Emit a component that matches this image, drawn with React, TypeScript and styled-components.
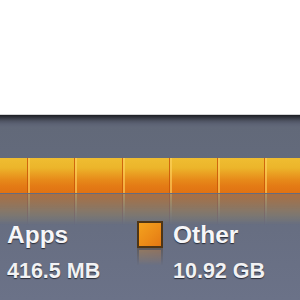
import React from "react";
import styled, { createGlobalStyle } from "styled-components";

const Global = createGlobalStyle`
  html, body { margin: 0; padding: 0; background: #ffffff; overflow: hidden; }
  body { font-family: "Liberation Sans", Arial, sans-serif; }
`;

const Page = styled.div`
  width: 300px;
  height: 300px;
  display: flex;
  flex-direction: column;
  background: #ffffff;
`;

const TopArea = styled.div`
  height: 114px;
  flex: 0 0 auto;
  background: #ffffff;
`;

const Panel = styled.div`
  flex: 1 1 auto;
  border-top: 1px solid #d4d4d6;
  overflow: hidden;
  padding-top: 43px;
  display: flex;
  flex-direction: column;
  background: linear-gradient(
    to bottom,
    #1c1d23 0px,
    #363943 3px,
    #4f5463 6px,
    #5c6274 9px,
    #626979 12px,
    #646b7d 60px,
    #6b7288 185px
  );
`;

const Bar = styled.div`
  display: flex;
  height: 35px;
  margin-left: -19.4px;
  -webkit-box-reflect: below 1px
    linear-gradient(to bottom, transparent 0%, transparent 12%, rgba(255, 255, 255, 0.55) 100%);
`;

const Segment = styled.div`
  flex: 0 0 47.4px;
  box-sizing: border-box;
  border-right: 1px solid rgba(200, 82, 6, 0.8);
  background: linear-gradient(
    to bottom,
    #efbd31 0%,
    #ecb52b 28%,
    #ea9f22 45%,
    #e78a1a 62%,
    #e47b15 80%,
    #e07213 100%
  );
  box-shadow: inset 2px 0 0 rgba(255, 212, 96, 0.6);
`;

const Legend = styled.div`
  display: grid;
  grid-template-columns: 130px auto;
  padding-left: 7px;
  margin-top: 28px;
`;

const Item = styled.div`
  display: flex;
  align-items: flex-start;
  gap: 10px;
`;

const Swatch = styled.div`
  width: 26px;
  height: 27px;
  box-sizing: border-box;
  border: 2px solid #4e3516;
  background: linear-gradient(135deg, #f4a21e 0%, #ec8c18 55%, #e27814 100%);
  -webkit-box-reflect: below 0px
    linear-gradient(to bottom, transparent 0%, transparent 35%, rgba(255, 255, 255, 0.35) 100%);
`;

const Texts = styled.div`
  display: flex;
  flex-direction: column;
  gap: 10px;
`;

const Title = styled.div`
  font-family: "Liberation Sans", Arial, sans-serif;
  font-weight: 700;
  font-size: 24.5px;
  line-height: 28px;
  color: #f6f6f8;
  text-shadow: 0 1px 1px rgba(20, 22, 30, 0.75);
  white-space: nowrap;
`;

const Value = styled.div`
  font-family: "Liberation Sans", Arial, sans-serif;
  font-weight: 700;
  font-size: 21.5px;
  line-height: 25px;
  color: #f2f2f4;
  text-shadow: 0 1px 1px rgba(20, 22, 30, 0.75);
  white-space: nowrap;
`;

export default function App() {
  const segments = Array.from({ length: 7 });
  return (
    <Page>
      <Global />
      <TopArea />
      <Panel>
        <Bar>
          {segments.map((_, i) => (
            <Segment key={i} />
          ))}
        </Bar>
        <Legend>
          <Item>
            <Texts>
              <Title>Apps</Title>
              <Value>416.5 MB</Value>
            </Texts>
          </Item>
          <Item>
            <Swatch />
            <Texts>
              <Title>Other</Title>
              <Value>10.92 GB</Value>
            </Texts>
          </Item>
        </Legend>
      </Panel>
    </Page>
  );
}
